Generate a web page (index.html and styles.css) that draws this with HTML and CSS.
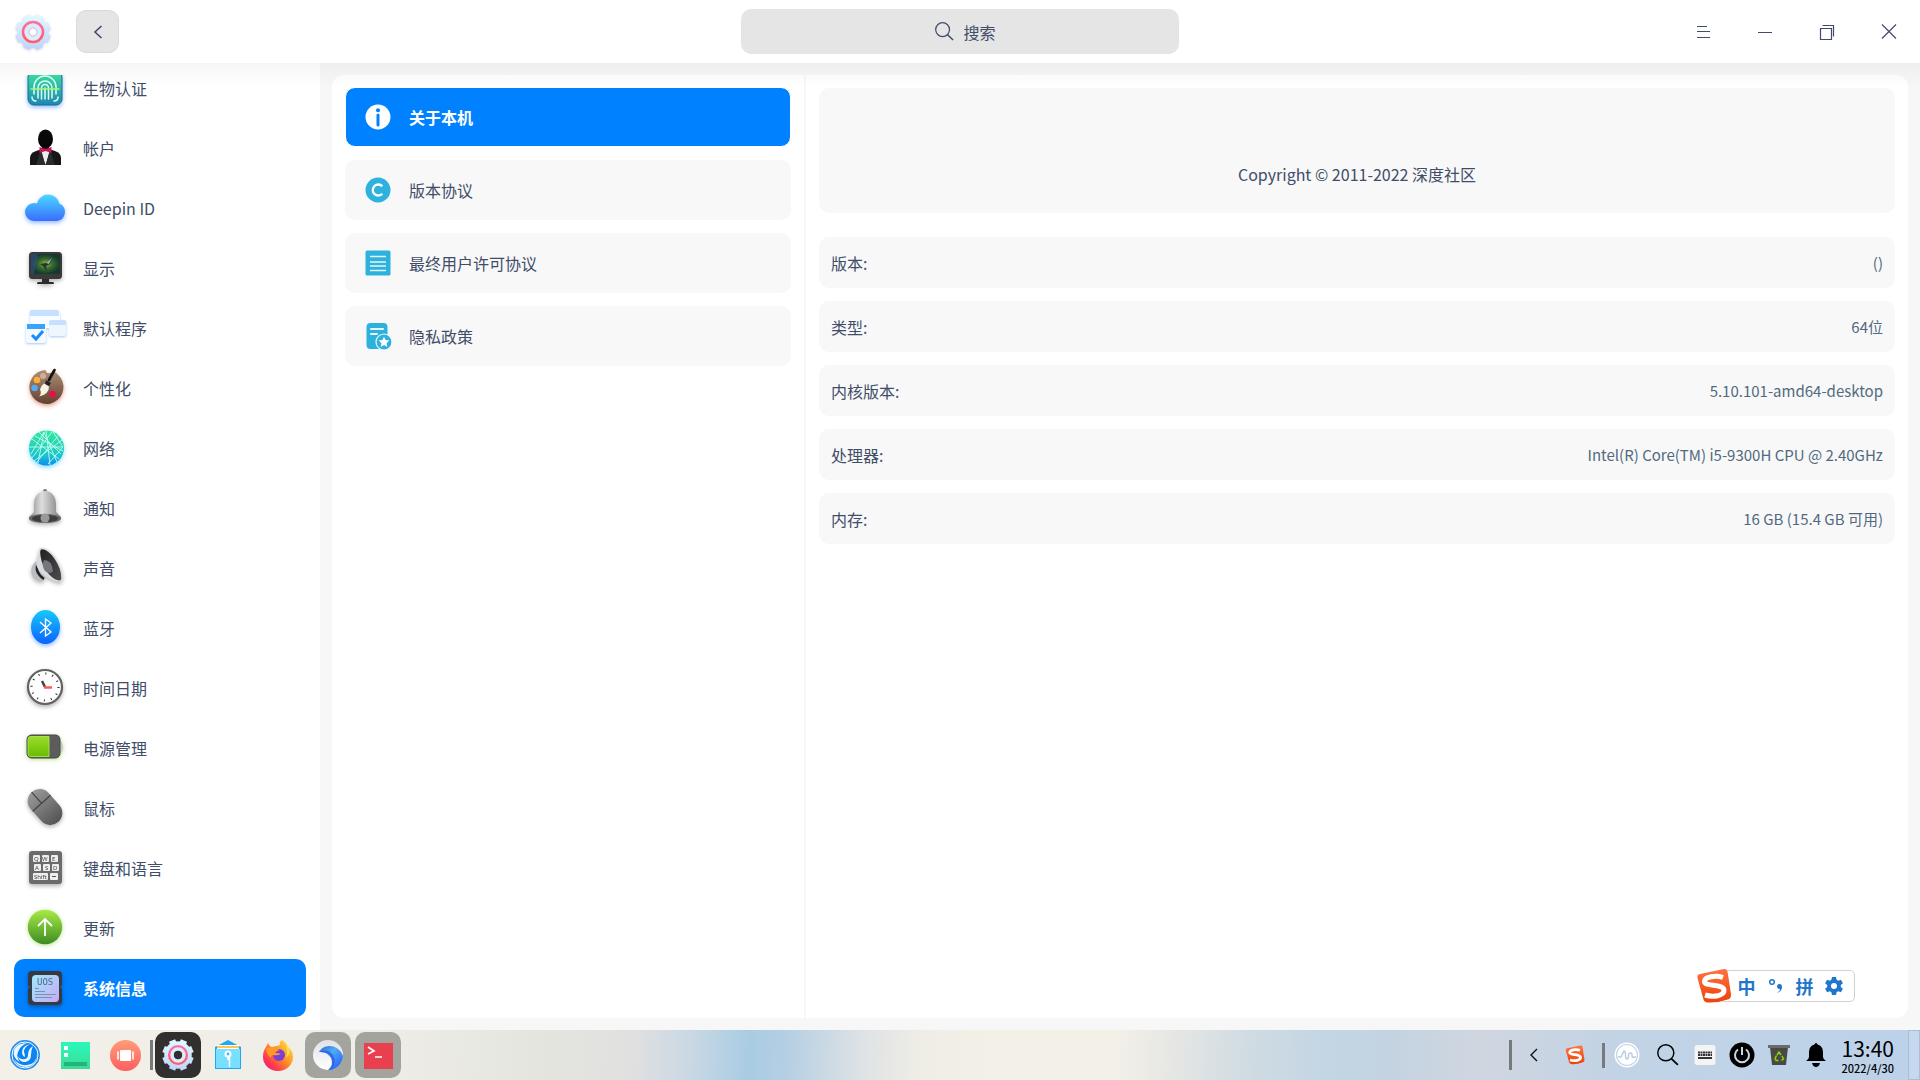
FILE: index.html
```html
<!DOCTYPE html>
<html lang="zh-CN">
<head>
<meta charset="utf-8">
<meta name="viewport" content="width=device-width, initial-scale=1">
<title>控制中心</title>
<link rel="stylesheet" href="styles.css">
</head>
<body>
<svg class="defs" aria-hidden="true">
  <defs>
    <linearGradient id="gear" x1="0" y1="0" x2="0" y2="36" gradientUnits="userSpaceOnUse"><stop offset="0" stop-color="#e2fbff"/><stop offset="1" stop-color="#bfd3fa"/></linearGradient>
    <linearGradient id="ring" x1="0" y1="0" x2="0" y2="1"><stop offset="0" stop-color="#ff70a0"/><stop offset="1" stop-color="#ff5c64"/></linearGradient>
    <linearGradient id="teal" x1="0" y1="0" x2="0" y2="1"><stop offset="0" stop-color="#3be6a0"/><stop offset="1" stop-color="#1f86b4"/></linearGradient>
    <linearGradient id="cloud" x1="0" y1="0" x2="0" y2="1"><stop offset="0" stop-color="#4ad8ff"/><stop offset="1" stop-color="#3b6dff"/></linearGradient>
    <radialGradient id="screen"><stop offset="0" stop-color="#8fc02e"/><stop offset=".5" stop-color="#356a30"/><stop offset="1" stop-color="#15382f"/></radialGradient>
    <linearGradient id="wood" x1="0" y1="0" x2="0" y2="1"><stop offset="0" stop-color="#ab9079"/><stop offset="1" stop-color="#65402f"/></linearGradient>
    <linearGradient id="net" x1="0" y1="0" x2="0" y2="1"><stop offset="0" stop-color="#34e89a"/><stop offset=".7" stop-color="#1fc6c8"/><stop offset="1" stop-color="#0a8cf5"/></linearGradient>
    <linearGradient id="silver" x1="0" y1="0" x2="1" y2="0"><stop offset="0" stop-color="#8a8a8a"/><stop offset=".4" stop-color="#dedede"/><stop offset="1" stop-color="#7c7c7c"/></linearGradient>
    <linearGradient id="cone" x1="0" y1="0" x2="1" y2="1"><stop offset="0" stop-color="#1f1f20"/><stop offset="1" stop-color="#4d4e52"/></linearGradient>
    <linearGradient id="blue" x1="0" y1="0" x2="0" y2="1"><stop offset="0" stop-color="#16c8fb"/><stop offset="1" stop-color="#0a63ff"/></linearGradient>
    <linearGradient id="lime" x1="0" y1="0" x2="0" y2="1"><stop offset="0" stop-color="#a8ea48"/><stop offset="1" stop-color="#3c8d22"/></linearGradient>
    <linearGradient id="charge" x1="0" y1="0" x2="0" y2="1"><stop offset="0" stop-color="#9ade2a"/><stop offset="1" stop-color="#68bd00"/></linearGradient>
    <linearGradient id="grey" x1="0" y1="0" x2="0" y2="1"><stop offset="0" stop-color="#999"/><stop offset="1" stop-color="#545454"/></linearGradient>
    <linearGradient id="uos" x1="0" y1="0" x2="1" y2="1"><stop offset="0" stop-color="#9fe8fb"/><stop offset="1" stop-color="#c5abf3"/></linearGradient>
    <linearGradient id="orange" x1="0" y1="0" x2="0" y2="1"><stop offset="0" stop-color="#ff7440"/><stop offset="1" stop-color="#ef4209"/></linearGradient>
    <linearGradient id="coral" x1="0" y1="0" x2="0" y2="1"><stop offset="0" stop-color="#ff9d78"/><stop offset="1" stop-color="#fd5e5e"/></linearGradient>
    <linearGradient id="mint" x1="0" y1="0" x2="0" y2="1"><stop offset="0" stop-color="#28f9bb"/><stop offset="1" stop-color="#3bdc93"/></linearGradient>
    <linearGradient id="fox" x1="1" y1="0" x2="0" y2="1"><stop offset="0" stop-color="#fff044"/><stop offset=".45" stop-color="#ff9125"/><stop offset=".75" stop-color="#ff3750"/><stop offset="1" stop-color="#e0128c"/></linearGradient>
    <linearGradient id="wave" x1="0" y1="0" x2="1" y2="1"><stop offset="0" stop-color="#2a6ad8"/><stop offset=".4" stop-color="#51adf2"/><stop offset="1" stop-color="#1c50ff"/></linearGradient>
    <linearGradient id="pearl" x1="0" y1="0" x2="0" y2="1"><stop offset="0" stop-color="#e0e2e5"/><stop offset="1" stop-color="#fff"/></linearGradient>
    <symbol id="cog" viewBox="0 0 36 36">
      <circle cx="18" cy="18" r="12" fill="none" stroke="url(#gear)" stroke-width="7"/>
      <path d="M18 4.500v-1M18 31.500v1" stroke="none"/>
      <g fill="none" stroke="url(#gear)" stroke-width="7.500">
        <path d="M11.300 1.800 12.500 4.700M24.700 1.800 23.500 4.700M34.200 11.300 31.300 12.500M34.200 24.700 31.300 23.500M24.700 34.200 23.500 31.300M11.300 34.200 12.500 31.300M1.800 24.700 4.700 23.500M1.800 11.300 4.700 12.500"/>
      </g>
      <circle cx="18" cy="18" r="7" fill="none" stroke="#dcebfd" stroke-width="5"/>
      <circle cx="18" cy="18" r="10" fill="none" stroke="url(#ring)" stroke-width="2.600"/>
    </symbol>
    <symbol id="sogou" viewBox="0 0 36 36">
      <path d="M4 6 28 1q3-.5 3.500 2.500L35 26q.5 4-2.500 5.200Q22 35 12 34.500q-4-.2-4.800-4L1.500 10Q.8 6.800 4 6z" fill="url(#orange)"/>
      <path d="M27 9.500C20 7 8.500 8.500 8.500 13.500c0 5.500 19 2 19.500 8.500.4 6-11 7.500-19 5" fill="none" stroke="#fff" stroke-width="5"/>
    </symbol>
    <symbol id="lens" viewBox="0 0 20 20"><circle cx="8" cy="8" r="7.300" fill="none" stroke="currentColor" stroke-width="1.300"/><path d="M13 13.200 19 19" stroke="currentColor" stroke-width="1.600"/></symbol>
  </defs>
</svg>

<div class="desktop">
  <header class="titlebar">
    <div class="titlebar-left">
      <svg class="app-icon" width="36" height="36" aria-hidden="true"><use href="#cog"/><circle cx="18" cy="18" r="4" fill="#fff" stroke="#ccd" stroke-width="1"/></svg>
      <button class="back" type="button" aria-label="返回"><svg width="10" height="14" viewBox="0 0 10 14"><path d="M8.500 1 2 7l6.500 6" fill="none" stroke="currentColor" stroke-width="1.600"/></svg></button>
    </div>
    <label class="search">
      <svg width="19" height="19" aria-hidden="true"><use href="#lens"/></svg>
      <input class="search-input" type="text" placeholder="搜索" aria-label="搜索">
    </label>
    <div class="window-controls">
      <button type="button" aria-label="菜单"><svg width="16" height="16" viewBox="0 0 16 16"><path d="M2 2.500h10M2 7.500h13M2 13.500h13" stroke="currentColor"/></svg></button>
      <button type="button" aria-label="最小化"><svg width="16" height="16" viewBox="0 0 16 16"><path d="M1 8.500h14" stroke="currentColor"/></svg></button>
      <button type="button" aria-label="还原"><svg width="16" height="16" viewBox="0 0 16 16"><path d="M1.500 4.500h11v11h-11zM3.500 1.500h11v11" fill="none" stroke="currentColor" stroke-width="1.200"/></svg></button>
      <button type="button" aria-label="关闭"><svg width="16" height="16" viewBox="0 0 16 16"><path d="M1 .5 15 14.500M15 .5 1 14.500" stroke="currentColor" stroke-width="1.200"/></svg></button>
    </div>
  </header>

  <main class="workspace">
    <nav class="sidebar" aria-label="模块">
      <ul class="modules">
        <li><a class="module" href="#biometric"><svg class="module-icon glow-blue" viewBox="0 0 42 42"><rect x="4" y="4" width="34" height="34" rx="6" fill="url(#teal)" stroke="#14708c"/><g fill="none" stroke="#dcfff0" stroke-width="1.500" stroke-linecap="round"><path d="M8 30q0 4 4 4M34 30q0 4-4 4M10 27V20a11 11 0 0 1 22 0v7M14 31V21a7 7 0 0 1 14 0v10M17.500 32V21a3.500 3.500 0 0 1 7 0v11M21 32V21"/><path d="M7 22h28" stroke="#a8f870"/></g></svg><span>生物认证</span></a></li>
        <li><a class="module" href="#accounts"><svg class="module-icon" viewBox="0 0 42 42"><path d="M6 38V31q0-5 6-7l6-2h7l6 2q6 2 6 7v7z" fill="#161616"/><path d="m17 24 4.500 14L26 24z" fill="#eee"/><path d="m17 22-5 16h9zM26 22l5 16h-9z" fill="#2b2b2b"/><path d="M18 18h7v6h-7z" fill="#0c0c0c"/><ellipse cx="21.500" cy="12" rx="7.500" ry="9.500" fill="#080808"/><path d="m15.500 20 6 2 6-2v6l-6-2-6 2z" fill="#c9145e"/></svg><span>帐户</span></a></li>
        <li><a class="module" href="#deepinid"><svg class="module-icon glow-blue" viewBox="0 0 42 42"><path d="M10 34a9 9 0 0 1 0-18q1.500 0 3 .4a11.500 11.500 0 0 1 22.500.4A9 9 0 0 1 33 34z" fill="url(#cloud)"/></svg><span>Deepin ID</span></a></li>
        <li><a class="module" href="#display"><svg class="module-icon soft" viewBox="0 0 42 42"><path d="M18 30h7v5h4q1 0 1 2H13q0-2 1-2h4z" fill="#2c2c2c"/><rect x="5" y="5" width="33" height="27" rx="3.500" fill="#3a3a3a"/><rect x="7" y="7" width="29" height="20" rx="1" fill="url(#screen)"/><path d="m7 7 7 0-4 20H7z" fill="#36508b" opacity=".6"/><path d="m16 17 6-1 7-6-3 7-4 2 1 5-4-5z" fill="#20352e"/><path d="m22 16 6-5-3 6z" fill="#a2a8b0"/></svg><span>显示</span></a></li>
        <li><a class="module" href="#defaults"><svg class="module-icon glow-pale" viewBox="0 0 42 42"><rect x="6" y="4" width="30" height="17" rx="2" fill="#f8fbff"/><path d="M8 3h25q2 0 2 2v4H6V5q0-2 2-2z" fill="#c8e0ff"/><rect x="25" y="13" width="17" height="16" rx="2" fill="#eef6ff"/><path d="M27 13h13q2 0 2 2v3H25v-3q0-2 2-2z" fill="#c8e0ff"/><rect x="2" y="16" width="20" height="20" rx="2" fill="#f4faff"/><path d="M3 17h18v5H3z" fill="#38a3ff"/><path d="m8 28 4 4 7-8" fill="none" stroke="#168cff" stroke-width="3"/></svg><span>默认程序</span></a></li>
        <li><a class="module" href="#personalization"><svg class="module-icon glow-red" viewBox="0 0 42 42"><path d="M21.500 3q1 4 4 3l5-1A17 17 0 1 1 21.500 3z" fill="url(#wood)"/><circle cx="19" cy="9" r="3" fill="#cfae9f"/><circle cx="13" cy="13" r="3.300" fill="#ffae35"/><circle cx="10.500" cy="21" r="3.300" fill="#58a9f5"/><circle cx="28.500" cy="27" r="3.300" fill="#e60f49"/><path d="M30.500 3 25 13" stroke="#111" stroke-width="2.600" stroke-linecap="round"/><path d="m22 13 5 3-2 3-4-2z" fill="#222"/><path d="m20 16.500 5 3q0 8-10 10 3-3 1-7 1-4 4-6z" fill="#f5f2e8"/></svg><span>个性化</span></a></li>
        <li><a class="module" href="#network"><svg class="module-icon glow-cyan" viewBox="0 0 42 42"><circle cx="22.500" cy="21" r="17.500" fill="url(#net)"/><path d="M5 20h34M8 12l27 20M8 31 28 5M14 36 20 5l13 30M22 3l4 35M11 9l28 15M38 13 10 34M20 5 7 27M29 5l10 15-15 17M15 5l22 22M34 9 12 36" fill="none" stroke="#bdfdf0" stroke-width=".9"/></svg><span>网络</span></a></li>
        <li><a class="module" href="#notification"><svg class="module-icon soft" viewBox="0 0 42 42"><circle cx="21" cy="4" r="2" fill="#777"/><path d="M21 4c7 0 11 6 11 13v8l5 5v2H5v-2l5-5v-8C10 10 14 4 21 4z" fill="url(#silver)"/><ellipse cx="21" cy="31.500" rx="16" ry="4.500" fill="#666"/><ellipse cx="21" cy="31.500" rx="13" ry="3.500" fill="#3d3d3d"/><circle cx="21" cy="31" r="4.500" fill="#999"/></svg><span>通知</span></a></li>
        <li><a class="module" href="#sound"><svg class="module-icon soft" viewBox="0 0 42 42"><path d="M14 13q-9 5-6 15 3 7 12 6z" fill="#b9bcc1"/><path d="M14 16q-4 9 6 16" fill="none" stroke="#222" stroke-width="2.500"/><path d="M16 2q-2 6-4 15 3 13 24 18z" fill="#d9dadd"/><path d="M17 1.500C27 1 38 19 38 31c0 6-9 3-15-5C16 18 14 3 17 1.500z" fill="url(#cone)" stroke="#dcdcde" stroke-width="1.400"/><path d="M20 13q8 0 9 11-2 4-8 0-4-6-1-11z" fill="#75767d"/></svg><span>声音</span></a></li>
        <li><a class="module" href="#bluetooth"><svg class="module-icon glow-blue" viewBox="0 0 42 42"><ellipse cx="21.500" cy="20" rx="14.500" ry="17" fill="url(#blue)"/><path d="m16 15 11 10-5.500 4V12l5.500 4-11 10" fill="none" stroke="#fff" stroke-width="1.300"/></svg><span>蓝牙</span></a></li>
        <li><a class="module" href="#datetime"><svg class="module-icon soft" viewBox="0 0 42 42"><circle cx="21" cy="20" r="17" fill="#fff" stroke="#626262" stroke-width="2.200"/><circle cx="21" cy="20" r="13.500" fill="none" stroke="#333" stroke-width="2.200" stroke-dasharray="1 6.070"/><path d="m21 20-3-6" stroke="#444" stroke-width="2.500"/><path d="M20 20.500h8" stroke="#fc5a52" stroke-width="2.500"/></svg><span>时间日期</span></a></li>
        <li><a class="module" href="#power"><svg class="module-icon glow-lime" viewBox="0 0 42 42"><path d="M36 14q3 1 3 6t-3 6z" fill="#c9c9c9"/><rect x="3" y="8" width="33" height="23" rx="4.500" fill="#5c5c5c" stroke="#484848"/><path d="M7 9.500h18v20H7q-3 0-3-3v-14q0-3 3-3z" fill="url(#charge)" stroke="#b6ee5b" stroke-width=".8"/></svg><span>电源管理</span></a></li>
        <li><a class="module" href="#mouse"><svg class="module-icon soft" viewBox="0 0 42 42"><g transform="rotate(-42 21 20)"><rect x="9" y="0" width="24" height="40" rx="12" fill="url(#grey)"/><path d="M9 15h24M21 0v15" stroke="#444" stroke-width="1.200"/></g></svg><span>鼠标</span></a></li>
        <li><a class="module" href="#keyboard"><svg class="module-icon soft" viewBox="0 0 42 42"><rect x="5" y="4" width="33" height="33" rx="3" fill="#6b6b6b"/><g fill="#eee"><rect x="9" y="8" width="7" height="7" rx="1"/><rect x="18" y="8" width="7" height="7" rx="1"/><rect x="27" y="8" width="7" height="7" rx="1"/><rect x="10" y="17" width="7" height="7" rx="1"/><rect x="19" y="17" width="7" height="7" rx="1"/><rect x="28" y="17" width="7" height="7" rx="1"/><rect x="9" y="26" width="15" height="7" rx="1"/><rect x="26" y="26" width="8" height="7" rx="1"/></g><g class="keycaps"><text x="10" y="14">Q</text><text x="18" y="14">W</text><text x="28" y="14">E</text><text x="11" y="23">A</text><text x="21" y="23">S</text><text x="29" y="23">D</text><text x="10" y="32">Shift</text></g><path d="M28 29.500h4" stroke="#555"/></svg><span>键盘和语言</span></a></li>
        <li><a class="module" href="#update"><svg class="module-icon glow-lime" viewBox="0 0 42 42"><circle cx="21" cy="20" r="17.200" fill="url(#lime)"/><path d="M21 29V12M14 19l7-7 7 7" fill="none" stroke="#fff" stroke-width="1.800"/></svg><span>更新</span></a></li>
        <li><a class="module is-active" href="#systeminfo" aria-current="page"><svg class="module-icon soft" viewBox="0 0 42 42"><path d="M8 4h26q4 0 4 4v10l-2 2 2 2v12q0 4-4 4H8q-4 0-4-4V22l2-2-2-2V8q0-4 4-4z" fill="#363b43"/><rect x="8" y="8" width="27" height="27" rx="4" fill="url(#uos)"/><text class="chip" x="13" y="18">UOS</text><path d="M11 21.500h4M11 24.500h10M11 27.500h21M11 30.500h17" stroke="#7a90b4"/></svg><span>系统信息</span></a></li>
      </ul>
    </nav>

    <div class="panel">
      <nav class="pages" aria-label="系统信息">
        <a class="page is-active" href="#about" aria-current="page"><svg class="page-icon" viewBox="0 0 26 26"><circle cx="13" cy="13" r="12.500" fill="#fff"/><circle cx="13" cy="6.200" r="2" fill="#0081ff"/><path d="M13 11v10" stroke="#0081ff" stroke-width="3" stroke-linecap="round"/></svg><span>关于本机</span></a>
        <a class="page" href="#edition"><svg class="page-icon" viewBox="0 0 26 26"><circle cx="13" cy="13" r="12.500" fill="#2cb2dc"/><path d="M17.300 9.300a5.500 5.500 0 1 0 0 7.400" fill="none" stroke="#fff" stroke-width="2.300"/></svg><span>版本协议</span></a>
        <a class="page" href="#eula"><svg class="page-icon" viewBox="0 0 26 26"><rect x=".5" y=".5" width="25" height="25" rx="1.500" fill="#2cb2dc"/><path d="M5 6.500h16M5 12h16M5 16h16M5 20.500h16" stroke="#e9f8fc" stroke-width="1.500"/></svg><span>最终用户许可协议</span></a>
        <a class="page" href="#privacy"><svg class="page-icon" viewBox="0 0 26 26"><rect x="1.500" y="0" width="21" height="26" rx="4" fill="#2cb2dc"/><path d="M6 6h12M6 11h6" stroke="#e9f8fc" stroke-width="2" stroke-linecap="round"/><circle cx="19" cy="19" r="8" fill="#2cb2dc" stroke="#f7f7f7" stroke-width="1.200"/><path d="m19 13.700 1.600 3.400 3.700.5-2.700 2.600.7 3.700-3.300-1.800-3.300 1.800.7-3.700-2.700-2.600 3.700-.5z" fill="#fff"/></svg><span>隐私政策</span></a>
      </nav>
      <section class="details">
        <div class="copyright">Copyright © 2011-2022 深度社区</div>
        <dl class="facts">
          <div class="fact"><dt>版本:</dt><dd>()</dd></div>
          <div class="fact"><dt>类型:</dt><dd>64位</dd></div>
          <div class="fact"><dt>内核版本:</dt><dd>5.10.101-amd64-desktop</dd></div>
          <div class="fact"><dt>处理器:</dt><dd>Intel(R) Core(TM) i5-9300H CPU @ 2.40GHz</dd></div>
          <div class="fact"><dt>内存:</dt><dd>16 GB (15.4 GB 可用)</dd></div>
        </dl>
      </section>
    </div>
  </main>

  <footer class="dock">
    <div class="apps">
      <button class="app" type="button" aria-label="启动器"><svg width="32" height="32" viewBox="0 0 32 32"><circle cx="16" cy="16" r="14.300" fill="#0b83f0" stroke="#2b8fe8" stroke-width="1.400"/><circle cx="16" cy="16" r="13" fill="none" stroke="#fff"/><g fill="#e8f7ff"><path d="M18 4Q8 4 5 11q-2 8 6 12-4-5-2-10 2-6 9-9z"/><path d="M21 5q-8 2-8 8 0 4 3 5 0-3-1-5 0-5 6-8z"/><path d="M24 7q-5 3-5 9 0 3-3 4-5 1-7-3 1 6 7 6 6-1 6-7 0-5 2-9z"/><path d="M28 14q0 11-10 12-8 1-13-6 3 8 12 8 11-1 11-14z"/></g></svg></button>
      <button class="app" type="button" aria-label="多任务视图"><svg width="32" height="32" viewBox="0 0 32 32"><rect x="2" y="3" width="29" height="27" fill="url(#mint)"/><path d="M5 7h4v4H5zM5 14h4v4H5z" fill="#fff"/><path d="M5 23h23v4H5z" fill="#23b47c"/></svg></button>
      <button class="app" type="button" aria-label="窗口预览"><svg width="32" height="32" viewBox="0 0 32 32"><circle cx="16.500" cy="16.500" r="15.500" fill="url(#coral)"/><rect x="11" y="11" width="11" height="11" rx="1" fill="#fff"/><path d="M9 12.500v8M24 12.500v8" stroke="#fff" stroke-width="1.600"/></svg></button>
      <span class="divider"></span>
      <button class="app is-current" type="button" aria-label="控制中心"><svg width="32" height="32"><use href="#cog"/><circle cx="16" cy="16" r="4.200" fill="#31302e"/></svg></button>
      <button class="app" type="button" aria-label="应用商店"><svg width="32" height="32" viewBox="0 0 32 32"><path d="M3 8 16 1l13 7v22H3z" fill="#1eaaf0"/><path d="M5 6h22v5H5z" fill="#fff"/><path d="M5 7h22v2H5z" fill="#ffc44f"/><path d="M4 10h24v19H4z" fill="#78dfff"/><circle cx="16" cy="15" r="3.500" fill="#fff"/><circle cx="16" cy="15" r="1.400" fill="#38b9ef"/><path d="M16 18v3M17.500 18v10" stroke="#fff" stroke-width="1.500"/></svg></button>
      <button class="app" type="button" aria-label="Firefox"><svg width="32" height="32" viewBox="0 0 32 32"><path d="M20 1q4 2 6 7 5 4 5 10a15 14 0 0 1-30 0q0-6 3-10l2-4q1 3 4 4l4-1 4-1q-1-3 2-5z" fill="url(#fox)"/><circle cx="17" cy="16" r="6" fill="#7a3fd4"/><path d="M4 10q4-3 8-1l6 2q-4 1-5 3 4 0 6 1-4 2-8 1-2 0-2 3-4-3-5-9z" fill="#ff9a26"/><path d="M20 1q4 3 5 9 1 4-1 9 6-5 2-11-4-4-6-7z" fill="#ffe443"/></svg></button>
      <button class="app is-open" type="button" aria-label="浏览器"><svg width="32" height="32" viewBox="0 0 32 32"><circle cx="16" cy="16" r="15" fill="url(#pearl)"/><path d="M7 13C12 4 27 5 31 17a15 15 0 0 1-14 14C24 24 20 12 7 13z" fill="url(#wave)"/><path d="M7 13q9-4 14 3 4 8-2 15h-3q6-5 3-12-4-7-12-6z" fill="#2455e8" opacity=".7"/></svg></button>
      <button class="app is-open" type="button" aria-label="终端"><svg width="32" height="32" viewBox="0 0 32 32"><rect x="2" y="4" width="29" height="26" fill="#e8404e"/><path d="m6 8 6 4-6 3M13 18h7" fill="none" stroke="#fff" stroke-width="1.700"/></svg></button>
    </div>
    <div class="tray">
      <span class="divider"></span>
      <button class="tray-item wide" type="button" aria-label="展开托盘"><svg width="10" height="14" viewBox="0 0 10 14"><path d="M8 1 2 7l6 6" fill="none" stroke="#111" stroke-width="1.400"/></svg></button>
      <button class="tray-item" type="button" aria-label="输入法"><svg width="20" height="20"><use href="#sogou"/></svg></button>
      <span class="divider short"></span>
      <button class="tray-item wide" type="button" aria-label="系统监视器"><svg width="26" height="26" viewBox="0 0 26 26"><circle cx="13" cy="13" r="12.500" fill="#fff"/><circle cx="13" cy="13" r="10.500" fill="none" stroke="#c3d6e8" stroke-width="1.200"/><path d="M4 15h3l3-6q1.500 0 1.500 4t1.500 4 1.500-3 2-3 1.500 2.500 2 1.500h2" fill="none" stroke="#b7cbe0" stroke-width="1.400"/></svg></button>
      <button class="tray-item" type="button" aria-label="全局搜索"><svg width="22" height="22"><use href="#lens"/></svg></button>
      <button class="tray-item" type="button" aria-label="屏幕键盘"><svg width="22" height="22" viewBox="0 0 22 22"><rect x=".5" y="1" width="21" height="20" rx="3" fill="#f4f4f4"/><path d="M4 8.500h14M4 11h14" stroke="#333" stroke-width="1.800" stroke-dasharray="2 .5"/><path d="M4 14h14" stroke="#333" stroke-width="2"/></svg></button>
      <button class="tray-item" type="button" aria-label="电源"><svg width="26" height="26" viewBox="0 0 26 26"><circle cx="13" cy="13" r="12.500" fill="#000"/><path d="M9 7.500a7 7 0 1 0 8 0M13 5v8" fill="none" stroke="#c8d8e6" stroke-width="2"/></svg></button>
      <button class="tray-item" type="button" aria-label="回收站"><svg width="22" height="22" viewBox="0 0 22 22"><path d="M2 3h18l-2 18H4z" fill="#484a45"/><path d="M0 1h22v3H0z" fill="#6a6b6b"/><path d="m9 11 2-3 2 3M14 12l1.500 3-2 1.500M10.500 16.500H8l-1-2 1.500-3" fill="none" stroke="#8fd400" stroke-width="1.500"/></svg></button>
      <button class="tray-item" type="button" aria-label="通知"><svg width="22" height="24" viewBox="0 0 22 24"><path d="M11 0q1.500 0 1.500 1.500Q18 3 18 9v5q0 2 3 4H1q3-2 3-4V9q0-6 5.500-7.500Q9.500 0 11 0zM7 20h8q-1 4-4 4t-4-4z" fill="#000"/></svg></button>
      <time class="clock" datetime="2022-04-30T13:40"><span class="clock-time">13:40</span><span class="clock-date">2022/4/30</span></time>
      <button class="show-desktop" type="button" aria-label="显示桌面"></button>
    </div>
  </footer>

  <div class="ime">
    <svg class="ime-logo" width="36" height="36" aria-hidden="true"><use href="#sogou"/></svg>
    <button type="button">中</button>
    <button type="button" aria-label="标点"><svg width="16" height="16" viewBox="0 0 16 16"><circle cx="4" cy="4" r="2.300" fill="none" stroke="currentColor" stroke-width="1.500"/><path d="M9 15q3-2 3-4-3 0-3-2.500T11.500 6 14 9q0 4-5 6z" fill="currentColor"/></svg></button>
    <button type="button">拼</button>
    <button type="button" aria-label="设置"><svg width="18" height="18" viewBox="0 0 18 18"><path d="M7 0h4l.6 2.800 1.600.9 2.700-.9 2 3.500L15.800 8v2l2.100 1.700-2 3.500-2.700-.9-1.600.9L11 18H7l-.6-2.800-1.600-.9-2.700.9-2-3.500L2.200 10V8L.1 6.300l2-3.500 2.700.9 1.600-.9z" fill="currentColor"/><circle cx="9" cy="9" r="3" fill="#fff"/></svg></button>
  </div>
</div>
</body>
</html>
```

FILE: styles.css
```css
* {
  box-sizing: border-box;
}

body {
  margin: 0;
  color: #414d68;
  font-family: "Noto Sans CJK SC", "Noto Sans", sans-serif;
  font-size: 16px;
  line-height: 24px;
}

button {
  display: flex;
  align-items: center;
  justify-content: center;
  padding: 0;
  border: 0;
  background: none;
  color: inherit;
  font: inherit;
}

a {
  color: inherit;
  text-decoration: none;
}

svg {
  flex: none;
  overflow: visible;
}

.defs {
  position: absolute;
  width: 0;
  height: 0;
}

.desktop {
  position: relative;
  display: flex;
  flex-direction: column;
  height: 100vh;
  overflow: hidden;
  background: #f7f7f7;
}

/* Title bar */

.titlebar {
  position: relative;
  display: grid;
  grid-template-columns: 1fr minmax(200px, 438px) 1fr;
  align-items: center;
  flex: none;
  height: 63px;
  background: #fff;
}

/* Shadow cast on the content below the title bar */
.titlebar::after {
  position: absolute;
  z-index: 1;
  top: 100%;
  right: 0;
  left: 0;
  height: 24px;
  background: linear-gradient(rgba(0, 0, 0, 0.035), rgba(0, 0, 0, 0));
  content: "";
  pointer-events: none;
}

.titlebar-left {
  display: flex;
  align-items: center;
  gap: 25px;
  padding-left: 15px;
}

.app-icon {
  filter: drop-shadow(0 1px 1px rgba(60, 80, 120, 0.3));
}

.back {
  width: 43px;
  height: 43px;
  border: 1px solid #dadada;
  border-radius: 10px;
  background: #e5e5e5;
}

.search {
  display: flex;
  align-items: center;
  justify-content: center;
  gap: 10px;
  height: 45px;
  padding-left: 12px;
  border-radius: 10px;
  background: #e5e5e5;
}

.search-input {
  width: 34px;
  padding: 0;
  border: 0;
  background: none;
  color: inherit;
  font: inherit;
}

.search-input::placeholder {
  color: inherit;
  opacity: 1;
}

.window-controls {
  display: flex;
  justify-content: flex-end;
}

.window-controls button {
  width: 62px;
  height: 62px;
}

/* Content */

.workspace {
  display: flex;
  flex: 1;
  min-height: 0;
}

.sidebar {
  display: flex;
  flex: none;
  width: 320px;
  padding: 12px 14px 13px;
  background: #fff;
}

.modules {
  display: flex;
  flex: 1;
  flex-direction: column;
  justify-content: flex-end;
  gap: 2px;
  margin: 0;
  padding: 0;
  overflow: hidden;
  list-style: none;
}

.module {
  display: flex;
  align-items: center;
  gap: 17px;
  height: 58px;
  padding-left: 10px;
  border-radius: 10px;
}

.module-icon {
  width: 42px;
  height: 42px;
}

.is-active {
  background: #0081ff;
  color: #fff;
  font-weight: 700;
}

.soft { filter: drop-shadow(0 2px 2px rgba(0, 0, 0, 0.3)); }
.glow-blue { filter: drop-shadow(0 2px 2px rgba(40, 120, 255, 0.5)); }
.glow-pale { filter: drop-shadow(0 1px 1px rgba(80, 150, 230, 0.5)); }
.glow-cyan { filter: drop-shadow(0 2px 2px rgba(20, 190, 240, 0.5)); }
.glow-red { filter: drop-shadow(0 2px 2px rgba(200, 70, 30, 0.5)); }
.glow-lime { filter: drop-shadow(0 1px 2px rgba(110, 200, 20, 0.5)); }

.keycaps {
  fill: #444;
  font: 6px "Noto Sans", sans-serif;
}

.chip {
  fill: #4b6a8c;
  font: 400 9px "DejaVu Sans Mono", monospace;
}

.panel {
  display: flex;
  flex: 1;
  min-width: 0;
  margin: 12px;
  border-radius: 12px;
  background: #fff;
}

.pages {
  display: flex;
  flex: none;
  flex-direction: column;
  gap: 13px;
  width: 474px;
  padding: 12px 13px;
  border-right: 2px solid #f7f7f7;
}

.page {
  display: flex;
  align-items: center;
  gap: 18px;
  height: 60px;
  padding-left: 20px;
  border-radius: 10px;
  background: #f8f8f8;
}

.page.is-active {
  padding-left: 19px;
  border: 1px solid #fff;
  background: #0081ff;
}

.page-icon {
  width: 26px;
  height: 26px;
}

.details {
  flex: 1;
  min-width: 0;
  padding: 13px;
}

.copyright {
  display: flex;
  align-items: flex-end;
  justify-content: center;
  height: 125px;
  padding-bottom: 27px;
  border-radius: 10px;
  background: #f8f8f8;
}

.facts {
  display: flex;
  flex-direction: column;
  gap: 13px;
  margin: 24px 0 0;
}

.fact {
  display: flex;
  align-items: center;
  justify-content: space-between;
  height: 51px;
  padding: 0 12px;
  border-radius: 10px;
  background: #f8f8f8;
}

.fact dd {
  margin: 0;
  color: #526a7f;
  font-size: 15px;
}

/* Dock */

.dock {
  display: flex;
  justify-content: space-between;
  flex: none;
  height: 50px;
  background: linear-gradient(93deg, #f3f0e8 0%, #eeede7 20%, #e5e5df 28%, #e0e0e0 33%, #c9d8e4 36%, #a9cce3 39%, #b5cfe3 41%, #dfe3e5 45%, #efede5 48%, #f3f0e8 52%, #f3f0e8 58%, #e6e7e4 61%, #d0dbe2 65%, #c3d6e4 69%, #c3d3e1 72%, #d0d6e0 77%, #c2d3e5 84%, #bcd2ea 100%);
}

.apps,
.tray {
  display: flex;
  align-items: center;
}

.app {
  width: 46px;
  height: 46px;
  margin: 0 2px;
  border-radius: 10px;
}

.app.is-current {
  background: #31302e;
}

.app.is-open {
  background: #a4a49f;
}

.divider {
  width: 3px;
  height: 30px;
  background: #777a7d;
}

.divider.short {
  height: 25px;
}

.tray {
  color: #000;
}

.tray-item {
  width: 37px;
  height: 50px;
}

.tray-item.wide {
  width: 45px;
}

.tray-item + .divider {
  margin-left: 8px;
}

.clock {
  display: flex;
  flex-direction: column;
  align-items: flex-end;
  margin: 0 14px 0 7px;
}

.clock-time {
  font-size: 21px;
  line-height: 26px;
}

.clock-date {
  font-size: 11px;
  font-weight: 500;
  line-height: 14px;
}

.show-desktop {
  width: 12px;
  height: 50px;
  border: 1px solid #a9bfd1;
  background: rgba(255, 255, 255, 0.15);
}

/* Floating input method bar */

.ime {
  position: absolute;
  right: 65px;
  bottom: 78px;
  display: flex;
  align-items: center;
  height: 32px;
  padding-right: 6px;
  border: 1px solid #d2d2d2;
  border-radius: 5px;
  background: #fff;
  color: #1f76cb;
  font-size: 18px;
  font-weight: 700;
}

/* The logo hangs over the left end of the bar */
.ime-logo {
  margin-left: -24px;
}

.ime button {
  width: 29px;
}
```
